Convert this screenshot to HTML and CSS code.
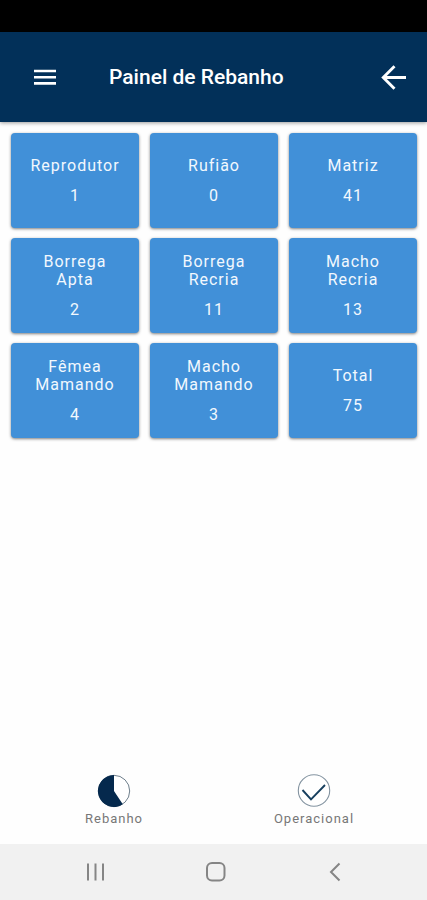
FILE: index.html
```html
<!DOCTYPE html>
<html lang="pt-BR">
<head>
<meta charset="utf-8">
<meta name="viewport" content="width=device-width, initial-scale=1">
<title>Painel de Rebanho</title>
<link rel="stylesheet" href="styles.css">
</head>
<body>
<div class="status-bar"></div>
<header class="app-bar">
  <button class="icon-button" type="button" aria-label="Menu">
    <svg width="24" height="24" viewBox="0 0 24 24"><path d="M1 6h22M1 12.200h22M1 18.400h22" stroke="#fff" stroke-width="2.600"/></svg>
  </button>
  <h1 class="title">Painel de Rebanho</h1>
  <button class="icon-button" type="button" aria-label="Voltar">
    <svg width="26" height="26" viewBox="0 0 26 26"><path d="M25 13.500H2.500M13.500 2.300 2.300 13.500 13.500 24.700" fill="none" stroke="#fff" stroke-width="2.900"/></svg>
  </button>
</header>
<main class="panel">
  <button class="card" type="button"><span>Reprodutor</span><span>1</span></button>
  <button class="card" type="button"><span>Rufião</span><span>0</span></button>
  <button class="card" type="button"><span>Matriz</span><span>41</span></button>
  <button class="card" type="button"><span>Borrega<br>Apta</span><span>2</span></button>
  <button class="card" type="button"><span>Borrega<br>Recria</span><span>11</span></button>
  <button class="card" type="button"><span>Macho<br>Recria</span><span>13</span></button>
  <button class="card" type="button"><span>Fêmea<br>Mamando</span><span>4</span></button>
  <button class="card" type="button"><span>Macho<br>Mamando</span><span>3</span></button>
  <button class="card" type="button"><span>Total</span><span>75</span></button>
</main>
<nav class="tabs">
  <a class="tab" href="#rebanho">
    <svg width="34" height="34" viewBox="0 0 34 34"><circle cx="17" cy="17" r="15.700" fill="#fff" stroke="#6f7f8c"/><path d="M17 17V1A16 16 0 1 0 25.800 30.300Z" fill="#05294d"/></svg>
    <span>Rebanho</span>
  </a>
  <a class="tab" href="#operacional">
    <svg width="34" height="34" viewBox="0 0 34 34"><circle cx="17" cy="16.500" r="15.700" fill="#fff" stroke="#8393a0" stroke-width="1.100"/><path d="M5.500 16 14 25.300 28 11" fill="none" stroke="#173f5e" stroke-width="1.900"/></svg>
    <span>Operacional</span>
  </a>
</nav>
<footer class="system-bar">
  <button class="system-button" type="button" aria-label="Recentes">
    <svg width="22" height="22" viewBox="0 0 22 22"><path d="M3 2.500v17M10.500 2.500v17M18 2.500v17" stroke="#858585" stroke-width="2"/></svg>
  </button>
  <button class="system-button" type="button" aria-label="Início">
    <svg width="22" height="22" viewBox="0 0 22 22"><rect x="2" y="2" width="17.500" height="17.500" rx="5" fill="none" stroke="#858585" stroke-width="2"/></svg>
  </button>
  <button class="system-button" type="button" aria-label="Voltar do sistema">
    <svg width="22" height="22" viewBox="0 0 22 22"><path d="M15.500 2.500 7 11l8.500 8.500" fill="none" stroke="#858585" stroke-width="2"/></svg>
  </button>
</footer>
</body>
</html>
```
FILE: styles.css
```css
* {
  box-sizing: border-box;
}

body {
  margin: 0;
  min-height: 100vh;
  display: flex;
  flex-direction: column;
  background: #fefefe;
  font-family: Roboto, "Liberation Sans", sans-serif;
}

button {
  border: 0;
  padding: 0;
  background: none;
  font: inherit;
}

svg {
  display: block;
}

.status-bar {
  height: 32px;
  background: #000;
}

.app-bar {
  height: 90px;
  padding: 0 20px 0 33px;
  display: flex;
  align-items: center;
  background: #023059;
  box-shadow: 0 1px 4px rgba(0, 0, 0, 0.4);
}

.title {
  flex: 1;
  margin: 0 0 0 52px;
  color: #fff;
  font-size: 21px;
  line-height: 24px;
  font-weight: 500;
}

.panel {
  flex: 1;
  padding: 11px 10px 11px 11px;
  display: grid;
  grid-template-columns: repeat(3, 1fr);
  grid-auto-rows: 95px;
  align-content: start;
  gap: 10px 11px;
}

.card {
  display: flex;
  flex-direction: column;
  align-items: center;
  justify-content: center;
  gap: 12px;
  border-radius: 4px;
  background: #4190d8;
  box-shadow: 0 1px 3px rgba(0, 0, 0, 0.5);
  color: #f2f8fe;
  font-size: 16px;
  line-height: 18px;
  letter-spacing: 1px;
}

.tabs {
  padding: 0 13px 17px 14px;
  display: flex;
}

.tab {
  flex: 1;
  display: flex;
  flex-direction: column;
  align-items: center;
  gap: 3px;
  color: #777;
  font-size: 13px;
  line-height: 16px;
  letter-spacing: 1px;
  text-decoration: none;
}

.system-bar {
  height: 56px;
  padding: 0 32px 0 36px;
  display: flex;
  align-items: center;
  background: #f1f1f1;
}

.system-button {
  flex: 1;
  display: flex;
  justify-content: center;
}
```
